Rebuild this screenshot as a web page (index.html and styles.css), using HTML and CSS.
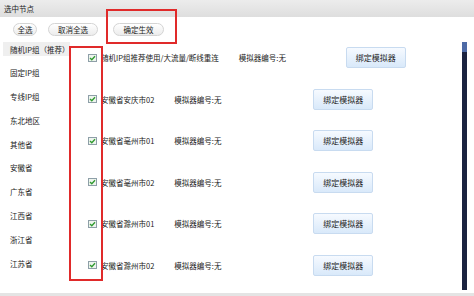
FILE: index.html
```html
<!DOCTYPE html>
<html lang="zh">
<head>
<meta charset="utf-8">
<link rel="stylesheet" href="styles.css">
</head>
<body>
<div class="page">
  <div class="header">选中节点</div>
  <div class="toolbar">
    <span class="pill w1">全选</span>
    <span class="pill w2">取消全选</span>
    <span class="pill w3">确定生效</span>
  </div>
  <div class="main">
    <ul class="sidebar">
      <li class="item selected">随机IP组（推荐）</li>
      <li class="item">固定IP组</li>
      <li class="item">专线IP组</li>
      <li class="item">东北地区</li>
      <li class="item">其他省</li>
      <li class="item">安徽省</li>
      <li class="item">广东省</li>
      <li class="item">江西省</li>
      <li class="item">浙江省</li>
      <li class="item">江苏省</li>
    </ul>
    <div class="content">
      <div class="row first">
        <svg class="cb" width="9" height="8" viewBox="0 0 9 8"><rect x="0.5" y="0.5" width="8" height="7" fill="#eef5ee" stroke="#8e9fa8"/><path d="M2 4 L3.8 5.8 L7 2.2" fill="none" stroke="#2f9a2f" stroke-width="1.3"/></svg>
        <span class="name">随机IP组推荐使用/大流量/断线重连</span>
        <span class="info">模拟器编号:无</span>
        <span class="bind">绑定模拟器</span>
      </div>
      <div class="row">
        <svg class="cb" width="9" height="8" viewBox="0 0 9 8"><rect x="0.5" y="0.5" width="8" height="7" fill="#eef5ee" stroke="#8e9fa8"/><path d="M2 4 L3.8 5.8 L7 2.2" fill="none" stroke="#2f9a2f" stroke-width="1.3"/></svg>
        <span class="name">安徽省安庆市02</span>
        <span class="info">模拟器编号:无</span>
        <span class="bind">绑定模拟器</span>
      </div>
      <div class="row">
        <svg class="cb" width="9" height="8" viewBox="0 0 9 8"><rect x="0.5" y="0.5" width="8" height="7" fill="#eef5ee" stroke="#8e9fa8"/><path d="M2 4 L3.8 5.8 L7 2.2" fill="none" stroke="#2f9a2f" stroke-width="1.3"/></svg>
        <span class="name">安徽省亳州市01</span>
        <span class="info">模拟器编号:无</span>
        <span class="bind">绑定模拟器</span>
      </div>
      <div class="row">
        <svg class="cb" width="9" height="8" viewBox="0 0 9 8"><rect x="0.5" y="0.5" width="8" height="7" fill="#eef5ee" stroke="#8e9fa8"/><path d="M2 4 L3.8 5.8 L7 2.2" fill="none" stroke="#2f9a2f" stroke-width="1.3"/></svg>
        <span class="name">安徽省亳州市02</span>
        <span class="info">模拟器编号:无</span>
        <span class="bind">绑定模拟器</span>
      </div>
      <div class="row">
        <svg class="cb" width="9" height="8" viewBox="0 0 9 8"><rect x="0.5" y="0.5" width="8" height="7" fill="#eef5ee" stroke="#8e9fa8"/><path d="M2 4 L3.8 5.8 L7 2.2" fill="none" stroke="#2f9a2f" stroke-width="1.3"/></svg>
        <span class="name">安徽省滁州市01</span>
        <span class="info">模拟器编号:无</span>
        <span class="bind">绑定模拟器</span>
      </div>
      <div class="row">
        <svg class="cb" width="9" height="8" viewBox="0 0 9 8"><rect x="0.5" y="0.5" width="8" height="7" fill="#eef5ee" stroke="#8e9fa8"/><path d="M2 4 L3.8 5.8 L7 2.2" fill="none" stroke="#2f9a2f" stroke-width="1.3"/></svg>
        <span class="name">安徽省滁州市02</span>
        <span class="info">模拟器编号:无</span>
        <span class="bind">绑定模拟器</span>
      </div>
    </div>
    <div class="scrollbar"><div class="thumb"></div></div>
  </div>
  <div class="footer"></div>
  <div class="mark mark-confirm"></div>
  <div class="mark mark-checks"></div>
</div>
</body>
</html>
```
FILE: styles.css
```css
html, body {
  margin: 0;
  padding: 0;
  background: #ffffff;
}
.page {
  position: relative;
  width: 474px;
  height: 296px;
  overflow: hidden;
  display: flex;
  flex-direction: column;
  font-family: "Noto Sans CJK SC", "Noto Sans", sans-serif;
  font-size: 7.5px;
  color: #222222;
}
.header {
  height: 17px;
  flex: none;
  display: flex;
  align-items: center;
  padding-left: 4px;
  background: linear-gradient(#ececec, #dedede);
}
.toolbar {
  height: 24px;
  flex: none;
  display: flex;
  align-items: center;
  padding-left: 13px;
  gap: 11px;
}
.pill {
  height: 13px;
  box-sizing: border-box;
  border: 1px solid #d4d4d4;
  border-radius: 7px;
  background: linear-gradient(#ffffff, #ececec);
  display: flex;
  align-items: center;
  justify-content: center;
}
.w1 { width: 24px; }
.w2 { width: 50px; }
.w3 { width: 51px; margin-left: 4px; }
.main {
  flex: 1;
  display: flex;
  min-height: 0;
}
.sidebar {
  list-style: none;
  margin: 0;
  padding: 1px 0 0 0;
  width: 72px;
  flex: none;
  display: flex;
  flex-direction: column;
  gap: 9.8px;
}
.item {
  height: 14px;
  margin-left: 3px;
  width: 67px;
  box-sizing: border-box;
  padding-left: 7px;
  display: flex;
  align-items: center;
  white-space: nowrap;
}
.selected {
  background: #efefef;
}
.content {
  flex: 1;
  display: flex;
  flex-direction: column;
  padding: 6px 0 0 16px;
  gap: 20.6px;
}
.row {
  height: 21px;
  display: flex;
  align-items: center;
  white-space: nowrap;
}
.cb {
  flex: none;
  margin-right: 4px;
}
.name {
  margin-right: 20px;
}
.info {
  width: 139px;
  flex: none;
}
.first .info {
  width: 107px;
}
.bind {
  width: 60px;
  height: 21px;
  box-sizing: border-box;
  border: 1px solid #c8dbf0;
  border-radius: 2px;
  background: linear-gradient(#f6faff, #d9e9fa);
  display: flex;
  align-items: center;
  justify-content: center;
  font-size: 8px;
  flex: none;
}
.scrollbar {
  width: 5px;
  flex: none;
  margin: 1px 7px 3px 0;
  background: #1b2340;
}
.thumb {
  height: 10px;
  background: #4d6aa6;
}
.footer {
  height: 3px;
  flex: none;
  background: #e4e4e4;
}
.mark {
  position: absolute;
  box-sizing: border-box;
  border: 2px solid #e02a2a;
}
.mark-confirm {
  left: 106px;
  top: 9px;
  width: 71px;
  height: 35px;
}
.mark-checks {
  left: 69px;
  top: 46px;
  width: 34px;
  height: 235px;
}
```
